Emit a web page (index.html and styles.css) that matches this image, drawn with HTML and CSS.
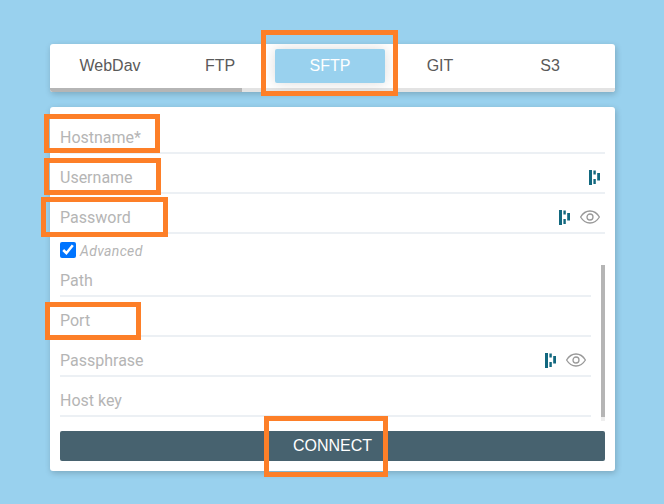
FILE: index.html
```html
<!DOCTYPE html>
<html lang="en">
<head>
  <meta charset="UTF-8" />
  <title>Connect</title>
  <link rel="stylesheet" href="styles.css">
</head>
<body>
  <div class="tabs">
    <div class="tab-row">
      <button type="button" class="tab">WebDav</button>
      <button type="button" class="tab">FTP</button>
      <button type="button" class="tab active">SFTP</button>
      <button type="button" class="tab">GIT</button>
      <button type="button" class="tab">S3</button>
    </div>
    <div class="progress"><div class="progress-fill"></div></div>
  </div>

  <form class="card">
    <div class="field"><input type="text" placeholder="Hostname*"></div>
    <div class="field">
      <input type="text" placeholder="Username">
      <svg class="icon-key" viewBox="0 0 11 15"><path d="M0 0h3v15H0zM4.400.5h2.400v4H4.400zM4.400 9h2.400v5H4.400zM8.200 3H11v7.500H8.200z"/></svg>
    </div>
    <div class="field">
      <input type="password" placeholder="Password">
      <svg class="icon-key" viewBox="0 0 11 15"><path d="M0 0h3v15H0zM4.400.5h2.400v4H4.400zM4.400 9h2.400v5H4.400zM8.200 3H11v7.500H8.200z"/></svg>
      <svg class="icon-eye" viewBox="0 0 20 14"><path d="M.6 7C3 3 6.200 1 10 1s7 2 9.400 6c-2.400 4-5.600 6-9.400 6S3 11 .6 7z"/><circle cx="10" cy="7" r="3"/></svg>
    </div>
    <label class="advanced"><input type="checkbox" checked> <span>Advanced</span></label>
    <div class="scroll-pane">
      <div class="field"><input type="text" placeholder="Path"></div>
      <div class="field"><input type="text" placeholder="Port"></div>
      <div class="field">
        <input type="password" placeholder="Passphrase">
        <svg class="icon-key" viewBox="0 0 11 15"><path d="M0 0h3v15H0zM4.400.5h2.400v4H4.400zM4.400 9h2.400v5H4.400zM8.200 3H11v7.500H8.200z"/></svg>
        <svg class="icon-eye" viewBox="0 0 20 14"><path d="M.6 7C3 3 6.200 1 10 1s7 2 9.400 6c-2.400 4-5.600 6-9.400 6S3 11 .6 7z"/><circle cx="10" cy="7" r="3"/></svg>
      </div>
      <div class="field"><input type="text" placeholder="Host key"></div>
      <div class="scrollbar"><div class="scrollbar-thumb"></div></div>
    </div>
    <button type="button" class="connect">CONNECT</button>
  </form>

  <!-- orange marks drawn on top of the screenshot -->
  <div class="mark mark-sftp"></div>
  <div class="mark mark-host"></div>
  <div class="mark mark-user"></div>
  <div class="mark mark-pass"></div>
  <div class="mark mark-port"></div>
  <div class="mark mark-connect"></div>
</body>
</html>
```

FILE: styles.css
```css
html, body {
  height: 100%;
}
body {
  margin: 0;
  padding: 44px 49px 0 50px;
  box-sizing: border-box;
  background: #99d1ee;
  font-family: Roboto, sans-serif;
  overflow: hidden;
}
.tabs {
  background: #fff;
  border-radius: 3px;
  box-shadow: 1px 2px 6px rgba(0, 0, 0, 0.2);
  overflow: hidden;
}
.tab-row {
  display: flex;
  padding: 5px;
}
.tab {
  width: 110px;
  height: 34px;
  padding: 0;
  border: none;
  border-radius: 2px;
  background: none;
  color: #5a5a5a;
  font-family: "Liberation Sans", sans-serif;
  font-size: 16px;
}
.tab.active {
  background: #99d1ee;
  color: #fff;
  box-shadow: 0 0 14px rgba(0, 0, 0, 0.14);
}
.progress {
  height: 4px;
  background: #e3e3e3;
}
.progress-fill {
  width: 192px;
  height: 100%;
  background: #b5b5b5;
}
.card {
  margin-top: 15px;
  padding: 7px 10px 10px;
  height: 364px;
  box-sizing: border-box;
  background: #fff;
  border-radius: 3px;
  box-shadow: 1px 2px 6px rgba(0, 0, 0, 0.2);
}
.field {
  display: flex;
  align-items: center;
  gap: 10px;
  height: 40px;
  box-sizing: border-box;
  padding-right: 5px;
  border-bottom: 2px solid #ecf0f4;
}
.field input {
  flex: 1;
  min-width: 0;
  height: 100%;
  padding: 8px 0 0;
  border: none;
  outline: none;
  background: none;
  font-family: Roboto, sans-serif;
  font-size: 16px;
}
.field input::placeholder {
  color: #b5b5b5;
}
.icon-key {
  width: 11px;
  height: 15px;
  margin-top: 9px;
  fill: #12687f;
}
.icon-eye {
  width: 20px;
  height: 14px;
  margin-top: 8px;
  fill: none;
  stroke: #999;
  stroke-width: 1.3;
}
.advanced {
  display: flex;
  align-items: flex-start;
  gap: 4px;
  height: 23px;
  box-sizing: border-box;
  padding-top: 8px;
  color: #b5b5b5;
  font-size: 14px;
  font-style: italic;
  letter-spacing: 0.35px;
}
.advanced input {
  width: 16px;
  height: 16px;
  margin: 0;
}
.advanced span {
  margin-top: 1px;
}
.scroll-pane {
  position: relative;
  height: 164px;
  padding-right: 14px;
}
.scrollbar {
  position: absolute;
  top: 8px;
  right: 0;
  bottom: 0;
  width: 4px;
  background: #eee;
}
.scrollbar-thumb {
  height: 152px;
  background: #b5b5b5;
}
.connect {
  display: block;
  width: 100%;
  height: 30px;
  margin-top: 10px;
  padding: 0 0 1px;
  border: none;
  border-radius: 2px;
  background: #47626f;
  color: #fff;
  font-family: "Liberation Sans", sans-serif;
  font-size: 16px;
}
.mark {
  position: absolute;
  box-sizing: border-box;
  border: 5px solid #fd7f28;
}
.mark-sftp { left: 261px; top: 30px; width: 137px; height: 66px; }
.mark-host { left: 44px; top: 114px; width: 116px; height: 39px; }
.mark-user { left: 44px; top: 158px; width: 117px; height: 37px; }
.mark-pass { left: 41px; top: 197px; width: 127px; height: 40px; }
.mark-port { left: 45px; top: 302px; width: 96px; height: 38px; }
.mark-connect { left: 264px; top: 416px; width: 124px; height: 61px; }
```
